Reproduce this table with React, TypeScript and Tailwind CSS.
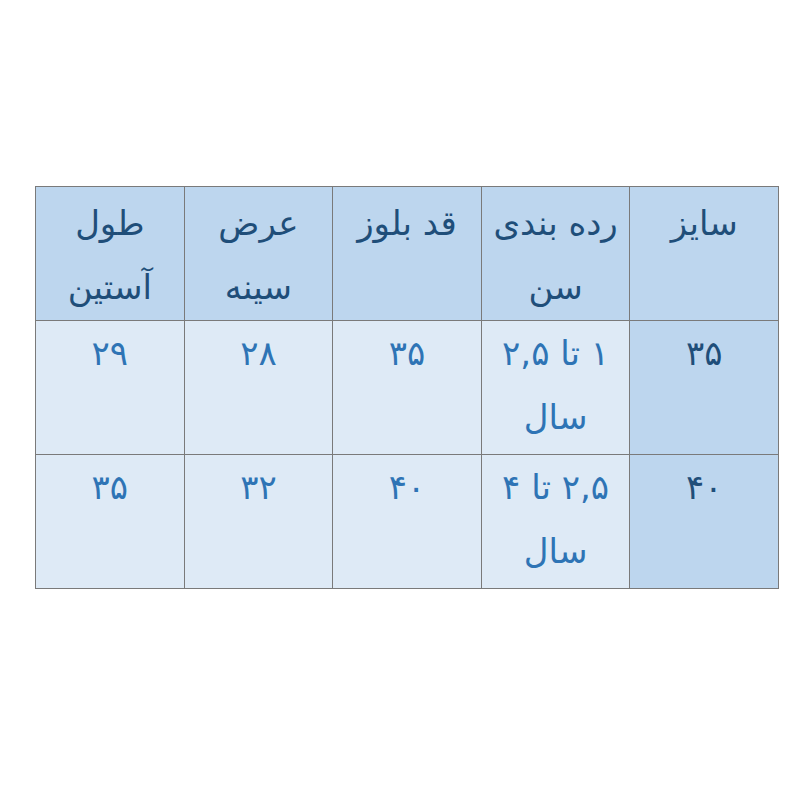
const header = [
  ["سایز"],
  ["رده بندی", "سن"],
  ["قد بلوز"],
  ["عرض", "سینه"],
  ["طول", "آستین"],
];

const rows = [
  [["۳۵"], ["۱ تا ۲,۵", "سال"], ["۳۵"], ["۲۸"], ["۲۹"]],
  [["۴۰"], ["۲,۵ تا ۴", "سال"], ["۴۰"], ["۳۲"], ["۳۵"]],
];

const Lines = ({ lines }: { lines: string[] }) => (
  <>
    {lines.map((l, i) => (
      <div key={i} className="h-[64px] leading-[64px]">
        {l}
      </div>
    ))}
  </>
);

export default function App() {
  return (
    <div className="w-[800px] h-[800px] bg-white pt-[186px] pl-[35px]" style={{ fontFamily: '"DejaVu Sans", sans-serif' }}>
      <table dir="rtl" className="w-[744px] border-collapse table-fixed text-[34px]">
        <tbody>
          <tr>
            {header.map((h, i) => (
              <td key={i} className="h-[134px] p-0 border border-[#7a7a7a] bg-[#bdd6ee] text-[#1f4e79] text-center align-top pt-[4px]">
                <Lines lines={h} />
              </td>
            ))}
          </tr>
          {rows.map((r, ri) => (
            <tr key={ri}>
              {r.map((c, ci) => (
                <td
                  key={ci}
                  className={
                    ci === 0
                      ? "h-[134px] p-0 border border-[#7a7a7a] bg-[#bdd6ee] text-[#1f4e79] text-center align-top"
                      : "h-[134px] p-0 border border-[#7a7a7a] bg-[#deeaf6] text-[#2e74b5] text-center align-top"
                  }
                >
                  <Lines lines={c} />
                </td>
              ))}
            </tr>
          ))}
        </tbody>
      </table>
    </div>
  );
}
